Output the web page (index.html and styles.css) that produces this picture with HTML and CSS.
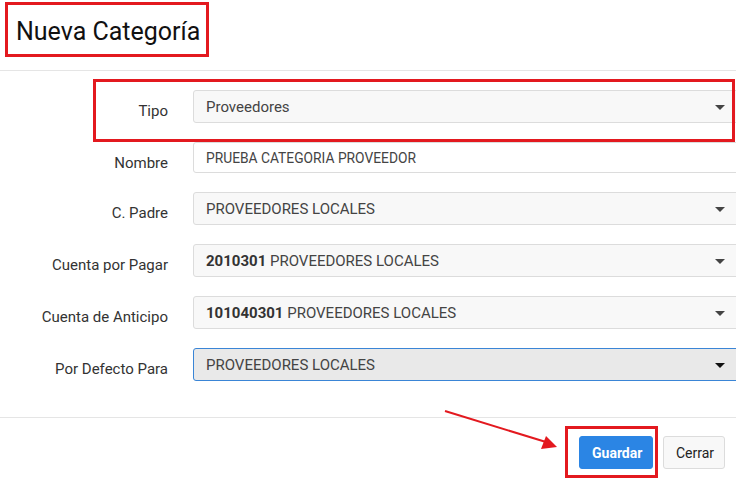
FILE: index.html
```html
<!DOCTYPE html>
<html lang="es">
<head>
<meta charset="utf-8">
<title>Nueva Categoría</title>
<link rel="stylesheet" href="styles.css">
</head>
<body>
<div class="modal">
  <div class="modal-header">
    <h4 class="title">Nueva Categoría</h4>
  </div>
  <form class="modal-body">
    <div class="row">
      <label class="lbl">Tipo</label>
      <div class="select"><span>Proveedores</span><i class="caret"></i></div>
    </div>
    <div class="row">
      <label class="lbl">Nombre</label>
      <div class="input">PRUEBA CATEGORIA PROVEEDOR</div>
    </div>
    <div class="row">
      <label class="lbl">C. Padre</label>
      <div class="select"><span>PROVEEDORES LOCALES</span><i class="caret"></i></div>
    </div>
    <div class="row">
      <label class="lbl">Cuenta por Pagar</label>
      <div class="select"><span><b>2010301</b> PROVEEDORES LOCALES</span><i class="caret"></i></div>
    </div>
    <div class="row">
      <label class="lbl">Cuenta de Anticipo</label>
      <div class="select"><span><b>101040301</b> PROVEEDORES LOCALES</span><i class="caret"></i></div>
    </div>
    <div class="row">
      <label class="lbl">Por Defecto Para</label>
      <div class="select focus"><span>PROVEEDORES LOCALES</span><i class="caret dark"></i></div>
    </div>
  </form>
  <div class="modal-footer">
    <button class="btn primary" type="button">Guardar</button>
    <button class="btn default" type="button">Cerrar</button>
  </div>

  <div class="mark mark-title"></div>
  <div class="mark mark-tipo"></div>
  <div class="mark mark-save"></div>
  <svg class="arrow" width="736" height="480" viewBox="0 0 736 480">
    <line x1="445" y1="411" x2="546" y2="442" stroke="#e3191f" stroke-width="2"/>
    <polygon points="557,447 541,449 546,436" fill="#e3191f"/>
  </svg>
</div>
</body>
</html>
```

FILE: styles.css
```css
html, body {
  margin: 0;
  padding: 0;
  background: #fff;
}
body {
  width: 736px;
  height: 480px;
  overflow: hidden;
  font-family: Roboto, "Liberation Sans", Arial, sans-serif;
  color: #333;
}
.modal {
  position: relative;
  width: 736px;
  height: 480px;
  overflow: hidden;
}
.modal-header {
  height: 71px;
  border-bottom: 1px solid #e5e5e5;
  box-sizing: border-box;
  padding: 16px 0 0 16px;
}
.title {
  margin: 0;
  font-size: 25px;
  font-weight: 400;
  line-height: 32px;
  color: #111;
}
.modal-body {
  margin: 0;
  padding: 19px 0 36px 0;
  display: flex;
  flex-direction: column;
  gap: 19px;
}
.row {
  display: grid;
  grid-template-columns: 168px 548px;
  column-gap: 25px;
}
.lbl {
  text-align: right;
  font-size: 15px;
  line-height: 20px;
  padding-top: 11px;
  color: #333;
}
.select, .input {
  box-sizing: border-box;
  height: 33px;
  border: 1px solid #dcdcdc;
  border-radius: 3px;
  background: #f8f8f8;
  display: flex;
  align-items: center;
  padding: 0 15px 0 12px;
  font-size: 15px;
  color: #444;
  position: relative;
}
.select span {
  flex: 1;
  white-space: nowrap;
}
.select b {
  font-weight: 700;
  color: #333;
}
.input {
  height: 31px;
  background: #fff;
  font-size: 13.8px;
  color: #444;
}
.select.focus {
  background: #e9e9e9;
  border-color: #3a85d6;
}
.caret {
  width: 0;
  height: 0;
  border-left: 5px solid transparent;
  border-right: 5px solid transparent;
  border-top: 5px solid #444;
  margin-top: 2px;
}
.caret.dark {
  border-top-color: #111;
}
.modal-footer {
  border-top: 1px solid #e5e5e5;
  padding: 18px 11px 0 0;
  display: flex;
  justify-content: flex-end;
  gap: 10px;
}
.btn {
  height: 33px;
  border-radius: 3px;
  font-family: Roboto, "Liberation Sans", Arial, sans-serif;
  font-size: 14px;
  padding: 0 12px;
  cursor: pointer;
}
.btn.primary {
  background: #2b85e4;
  border: 1px solid #2b85e4;
  color: #fff;
  font-weight: 700;
  width: 74px;
}
.btn.default {
  background: #f8f8f8;
  border: 1px solid #dcdcdc;
  color: #222;
  width: 62px;
}
.mark {
  position: absolute;
  border: 3px solid #e3191f;
  box-sizing: border-box;
  pointer-events: none;
}
.mark-title {
  left: 5px;
  top: 2px;
  width: 204px;
  height: 55px;
}
.mark-tipo {
  left: 93px;
  top: 79px;
  width: 642px;
  height: 63px;
}
.mark-save {
  left: 565px;
  top: 426px;
  width: 93px;
  height: 52px;
}
.arrow {
  position: absolute;
  left: 0;
  top: 0;
  pointer-events: none;
}
```
